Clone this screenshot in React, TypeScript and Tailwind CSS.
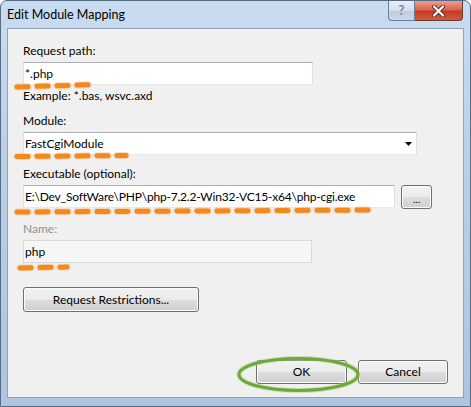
import type { ReactNode } from 'react';

const btn =
  'flex items-center justify-center rounded-[3px] border border-[#707070] bg-[linear-gradient(180deg,#f2f2f2_0%,#ebebeb_50%,#dddddd_51%,#cfcfcf_100%)] shadow-[inset_0_0_0_1px_#fbfbfb] text-black';

const box =
  'h-[23px] flex items-center pl-[1px] border border-[#b5b8be] border-t-[#abadb3] border-l-[#dbdfe6] border-r-[#dbdfe6] border-b-[#e3e9ef]';

function Label({ children, muted }: { children: ReactNode; muted?: boolean }) {
  return (
    <div className={`leading-[16px] ${muted ? 'text-[#8f8f8f]' : 'text-black'}`}>{children}</div>
  );
}

function Annotations() {
  // hand-drawn marks laid over the dialog
  const dash = (d: string, key: string) => (
    <g key={key}>
      <path d={d} stroke="#f7c089" strokeWidth={7} strokeDasharray="11 9" strokeLinecap="round" fill="none" opacity={0.55} />
      <path d={d} stroke="#f08a1e" strokeWidth={5} strokeDasharray="11 9" strokeLinecap="round" fill="none" />
    </g>
  );
  return (
    <svg className="absolute inset-0 pointer-events-none" width={471} height={407}>
      {dash('M16 86 L95 83.5', 'a')}
      {dash('M16 155.5 L125 154.5', 'b')}
      {dash('M16 211 L373 209', 'c')}
      {dash('M19 267 L66 266', 'd')}
      <ellipse cx={297.5} cy={373.5} rx={59.5} ry={16} fill="none" stroke="#a9cf80" strokeWidth={5} opacity={0.5} />
      <ellipse cx={297.5} cy={373.5} rx={59.5} ry={16} fill="none" stroke="#6ea83c" strokeWidth={3} />
    </svg>
  );
}

export default function App() {
  return (
    <div className="w-[471px] h-[407px] relative overflow-hidden font-[Lato,'Noto_Sans',sans-serif] text-[12px] rounded-t-[7px] border border-[#566b84] bg-[linear-gradient(180deg,#cadcef_0%,#bcd1e8_35%,#adc5e0_100%)]">
      <div className="h-[27px] flex items-start justify-between">
        <div className="pl-[6px] pt-[6px] leading-[16px] text-[12.5px] text-black">Edit Module Mapping</div>
        <div className="flex mr-[7px] h-[20px]">
          <div className="w-[27px] h-[20px] flex items-center justify-center rounded-bl-[4px] border border-t-0 border-[#6b809a] bg-[linear-gradient(180deg,#e6eef7_0%,#d3dfec_50%,#bccde0_51%,#c9d8e9_100%)] text-[#7b8898] font-bold text-[13px] leading-none">
            ?
          </div>
          <div className="w-[48px] h-[20px] flex items-center justify-center rounded-br-[4px] border border-t-0 border-l-0 border-[#6b3a35] bg-[linear-gradient(180deg,#eba090_0%,#d8654f_45%,#c53a25_55%,#d25a3a_100%)]">
            <svg width={13} height={12} viewBox="0 0 13 12">
              <path d="M2 1.5 L11 10.5 M11 1.5 L2 10.5" stroke="#5b2a22" strokeWidth={4} strokeLinecap="round" />
              <path d="M2 1.5 L11 10.5 M11 1.5 L2 10.5" stroke="#ffffff" strokeWidth={2.2} strokeLinecap="round" />
            </svg>
          </div>
        </div>
      </div>

      <div className="mx-[6px] h-[370px] border border-[#8ea3bb] bg-[#f0f0f0] flex flex-col px-[15px] pt-[14px] pb-[13px]">
        <Label>Request path:</Label>
        <div className={`${box} mt-[3px] w-[290px] bg-white`}>*.php</div>
        <div className="mt-[3px] leading-[16px]">Example: *.bas, wsvc.axd</div>

        <div className="mt-[9px]">
          <Label>Module:</Label>
        </div>
        <div className={`${box} mt-[3px] w-[394px] bg-white justify-between`}>
          <span>FastCgiModule</span>
          <svg width={7} height={4} viewBox="0 0 7 4" className="mr-[4px]">
            <path d="M0 0 H7 L3.5 4 Z" fill="#000" />
          </svg>
        </div>

        <div className="mt-[11px]">
          <Label>Executable (optional):</Label>
        </div>
        <div className="mt-[3px] flex gap-[6px] items-start">
          <div className={`${box} w-[372px] bg-white tracking-[-0.2px]`}>
            E:\Dev_SoftWare\PHP\php-7.2.2-Win32-VC15-x64\php-cgi.exe
          </div>
          <div className={`${btn} w-[31px] h-[24px] items-end pb-[4px] text-[10px] leading-none`}>...</div>
        </div>

        <div className="mt-[12px]">
          <Label muted>Name:</Label>
        </div>
        <div className="mt-[3px] h-[23px] w-[289px] flex items-center pl-[1px] border border-[#d9d9d9] bg-[#f6f6f6]">
          php
        </div>

        <div className={`${btn} mt-[24px] w-[176px] h-[25px]`}>Request Restrictions...</div>

        <div className="mt-auto flex justify-end gap-[11px]">
          <div className={`${btn} w-[91px] h-[24px] border-[#3c7fb1] shadow-[inset_0_0_0_1px_#a6dcf5]`}>OK</div>
          <div className={`${btn} w-[90px] h-[24px]`}>Cancel</div>
        </div>
      </div>

      <Annotations />
    </div>
  );
}
